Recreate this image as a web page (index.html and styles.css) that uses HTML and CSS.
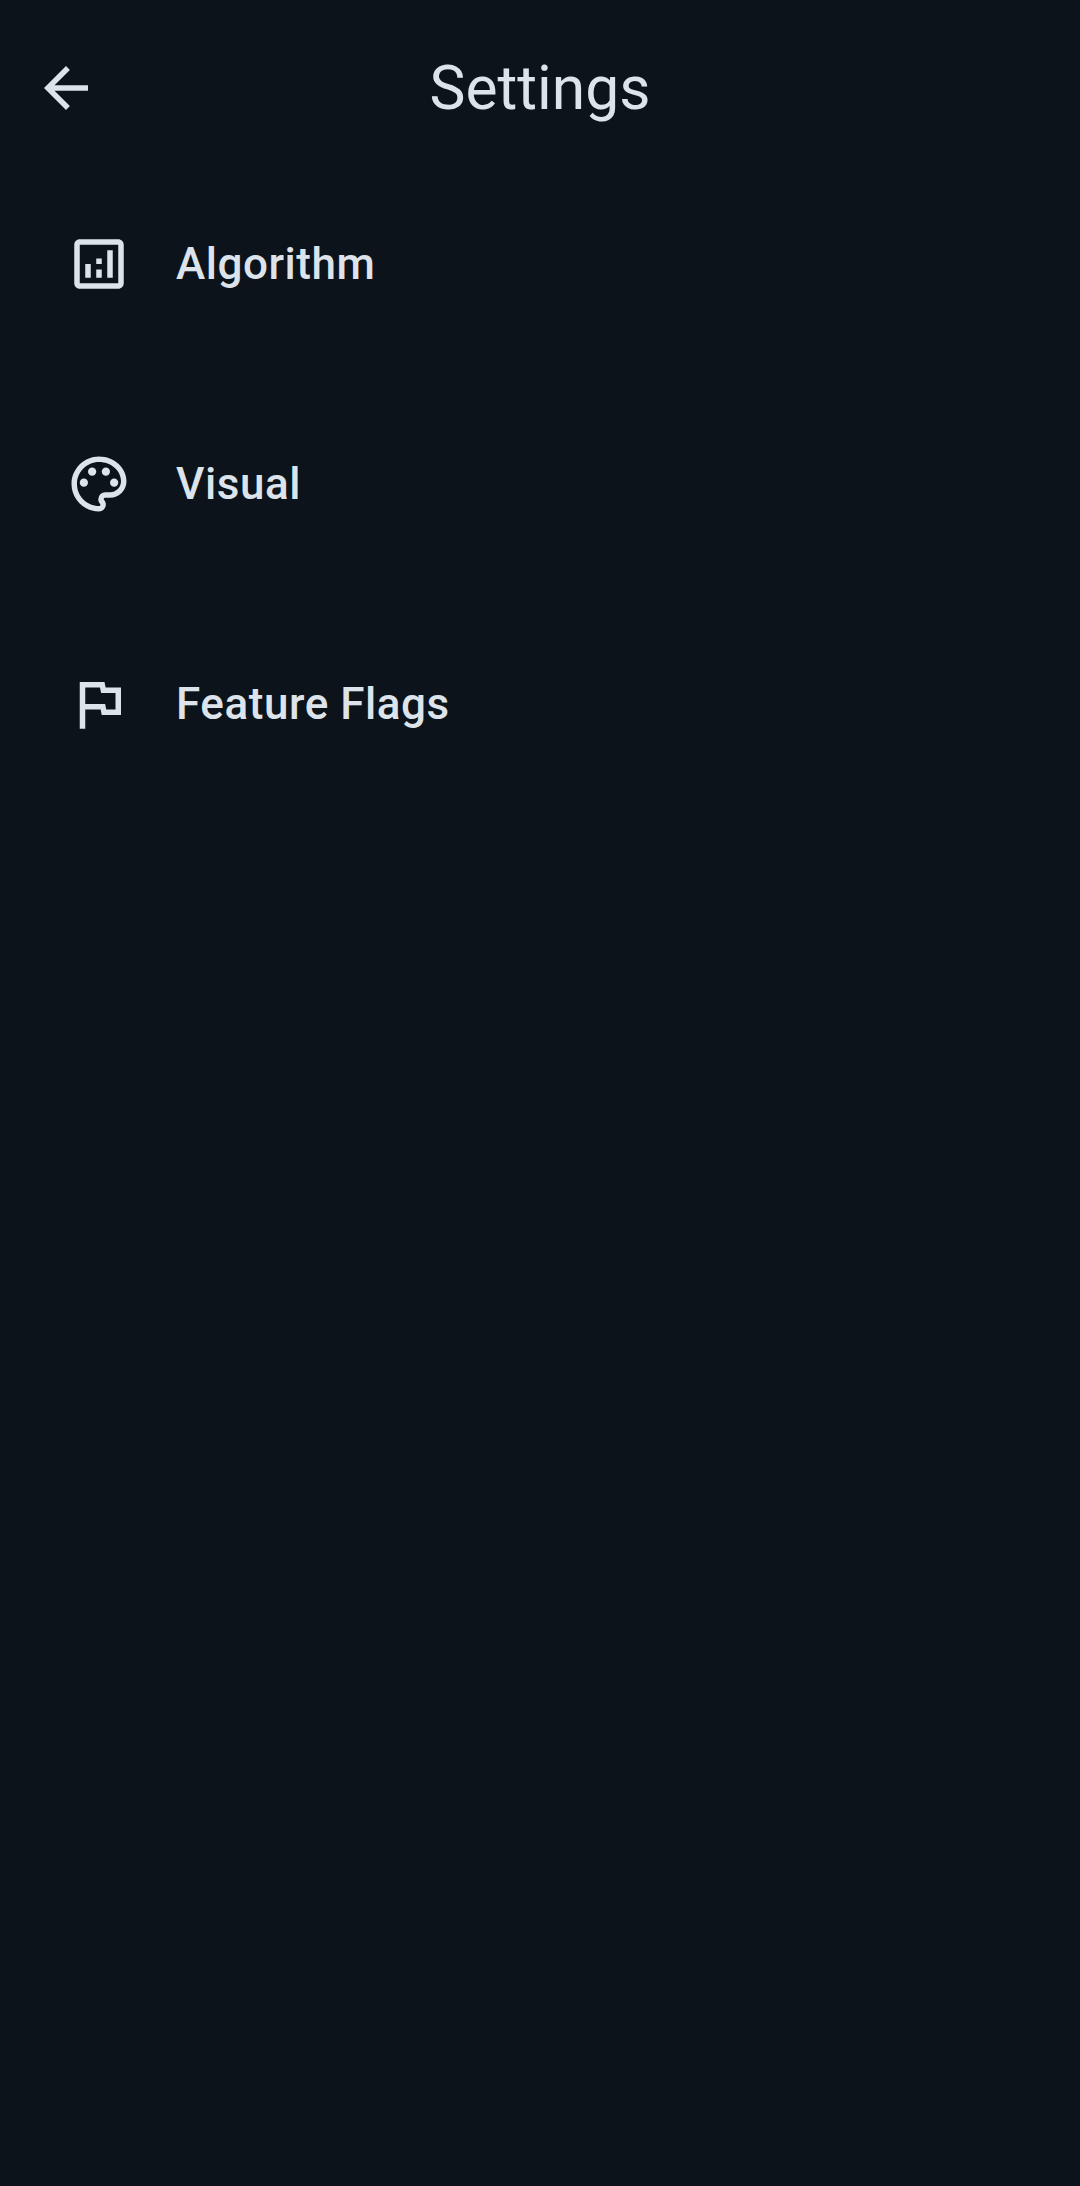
FILE: index.html
```html
<!DOCTYPE html>
<html lang="en">
<head>
<meta charset="utf-8">
<title>Settings</title>
<link rel="stylesheet" href="styles.css">
</head>
<body>
<header class="app-bar">
  <svg class="icon" viewBox="0 0 24 24"><path d="M20 11H7.83l5.59-5.59L12 4l-8 8 8 8 1.41-1.41L7.83 13H20v-2z"/></svg>
  <h1 class="title">Settings</h1>
</header>
<main class="list">
  <div class="row">
    <svg class="icon" viewBox="0 0 24 24"><path d="M19 3H5c-1.100 0-2 .9-2 2v14c0 1.100.9 2 2 2h14c1.100 0 2-.9 2-2V5c0-1.100-.9-2-2-2zm0 16H5V5h14v14zM7 12h2v5H7zM15 7h2v10h-2zM11 14h2v3h-2zM11 10h2v2h-2z"/></svg>
    <span class="label">Algorithm</span>
  </div>
  <div class="row">
    <svg class="icon" viewBox="0 0 24 24"><path d="M12 22C6.490 22 2 17.510 2 12S6.490 2 12 2s10 4.040 10 9c0 3.310-2.690 6-6 6h-1.770c-.28 0-.5.220-.5.500 0 .120.050.230.130.330.410.470.640 1.060.640 1.670A2.500 2.500 0 0 1 12 22zm0-18c-4.410 0-8 3.590-8 8s3.590 8 8 8c.28 0 .5-.22.5-.5a.54.54 0 0 0-.14-.35c-.41-.46-.63-1.050-.63-1.650a2.500 2.500 0 0 1 2.500-2.500H16c2.210 0 4-1.790 4-4 0-3.860-3.590-7-8-7z"/><circle cx="6.500" cy="11.500" r="1.500"/><circle cx="9.500" cy="7.500" r="1.500"/><circle cx="14.500" cy="7.500" r="1.500"/><circle cx="17.500" cy="11.500" r="1.500"/></svg>
    <span class="label">Visual</span>
  </div>
  <div class="row">
    <svg class="icon" viewBox="0 0 24 24"><path d="M12.360 6l.4 2H18v6h-3.360l-.4-2H7V6h5.360M14 4H5v17h2v-7h5.600l.4 2h7V6h-5.600L14 4z"/></svg>
    <span class="label">Feature Flags</span>
  </div>
</main>
</body>
</html>
```
FILE: styles.css
```css
body {
  margin: 0;
  min-height: 2186px;
  background: #0c131a;
  color: #dde3ea;
  font-family: Roboto, sans-serif;
}

.app-bar {
  display: grid;
  grid-template-columns: 66px 1fr 66px;
  align-items: center;
  height: 176px;
  padding: 0 33px;
}

.title {
  margin: 0;
  font-size: 60.500px;
  font-weight: 400;
  line-height: 77px;
  text-align: center;
}

.icon {
  display: block;
  width: 66px;
  height: 66px;
  flex: none;
  fill: currentColor;
}

.row {
  display: flex;
  align-items: center;
  gap: 44px;
  height: 176px;
  margin-bottom: 44px;
  padding: 0 66px;
}

.label {
  font-size: 44px;
  font-weight: 500;
  line-height: 66px;
  letter-spacing: 0.550px;
}
```
